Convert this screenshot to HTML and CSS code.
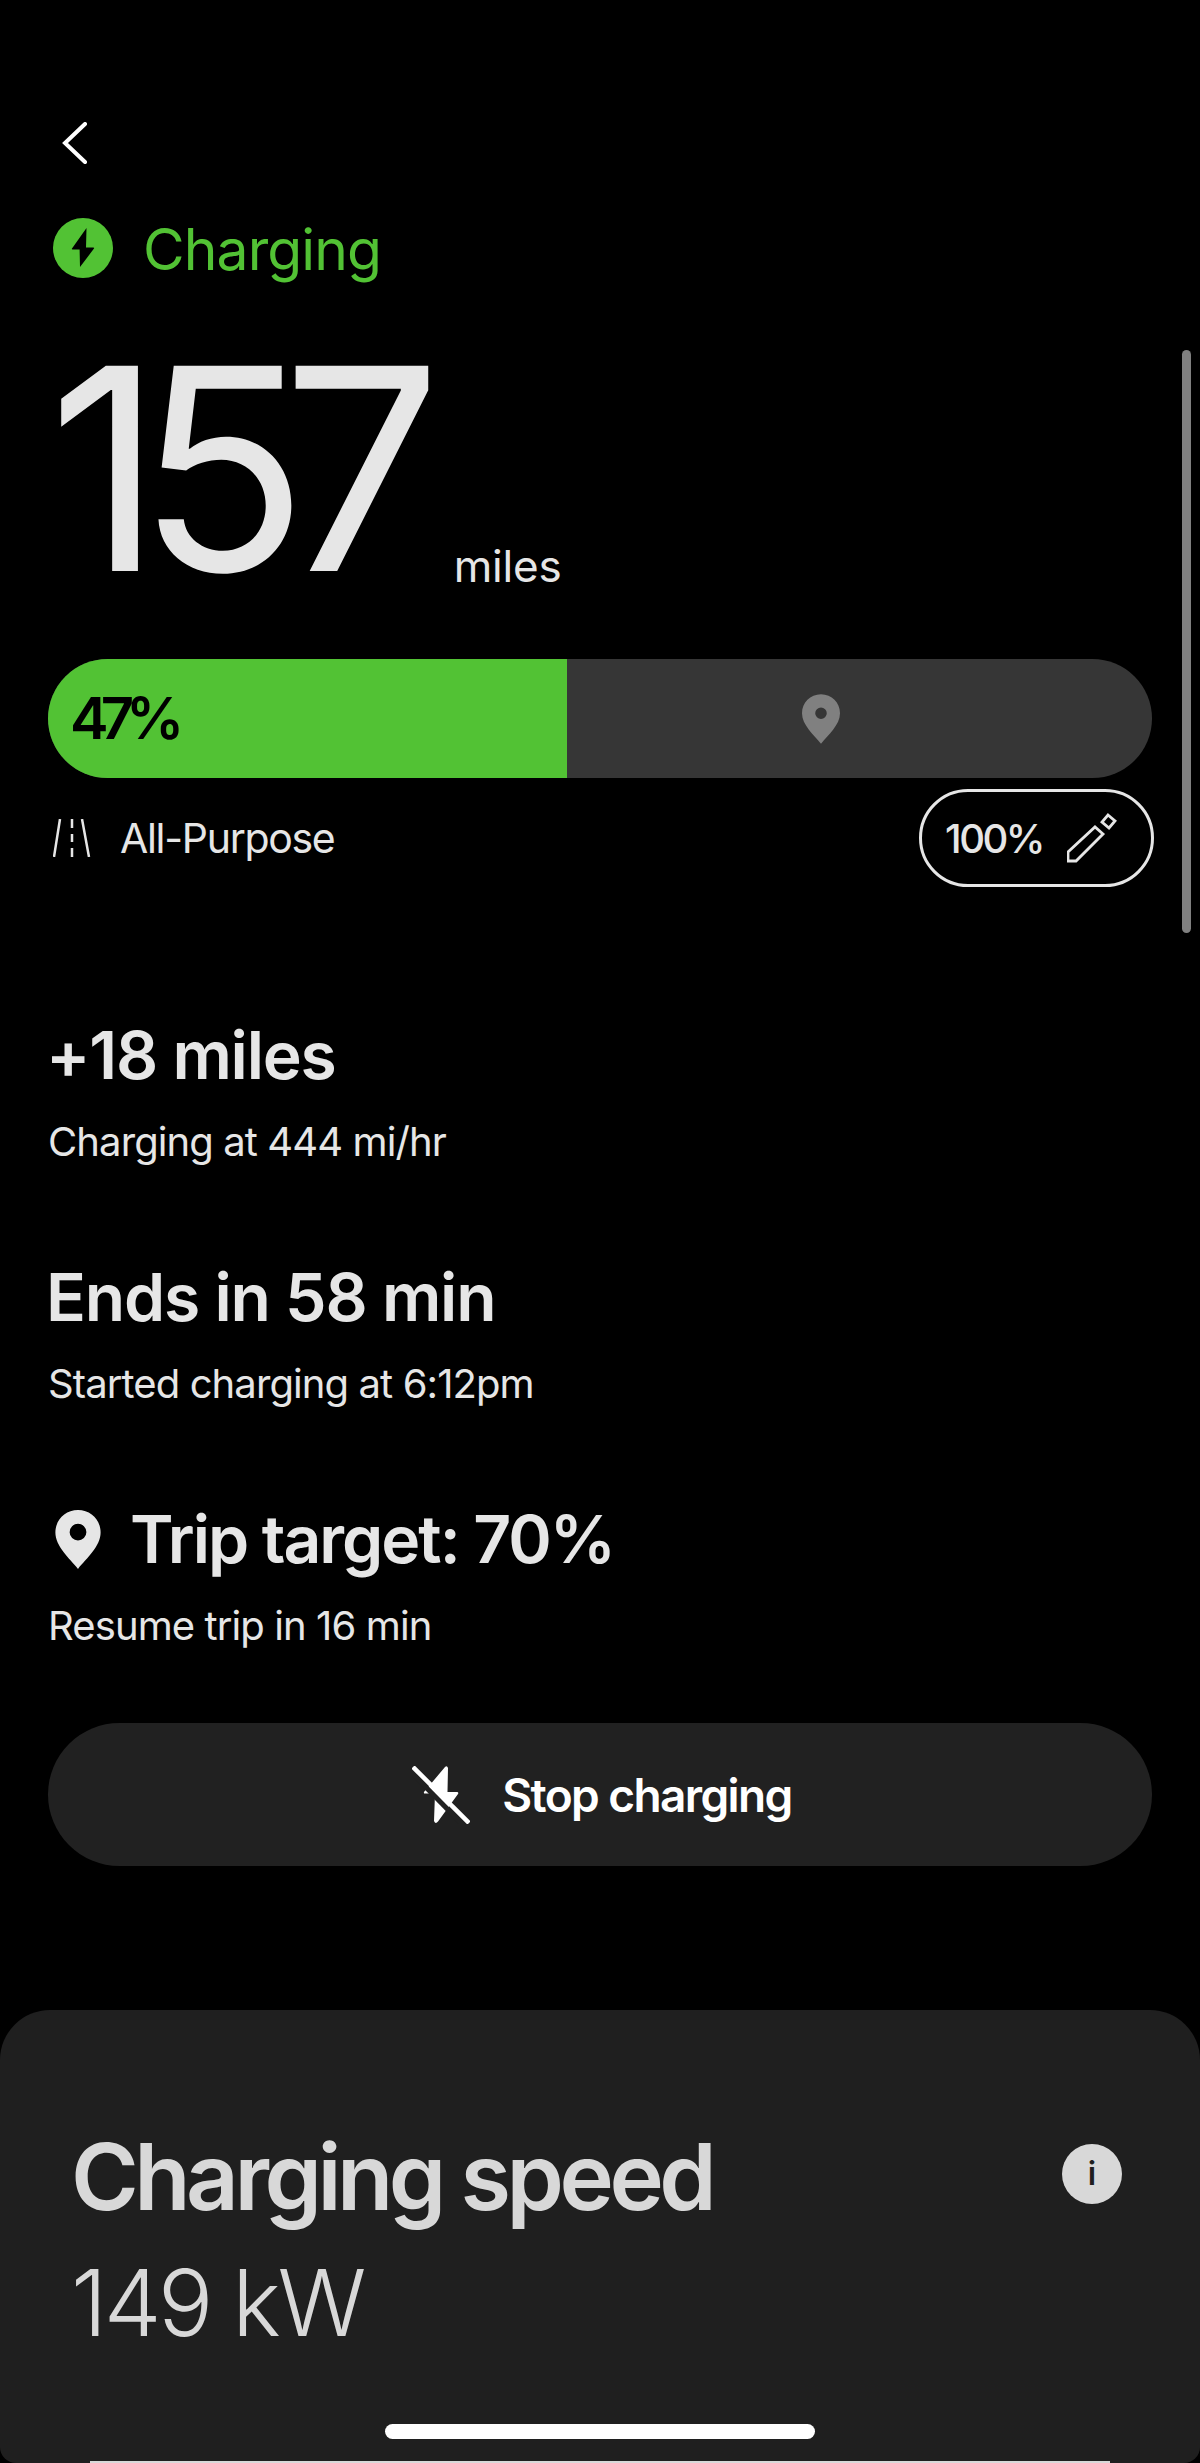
FILE: index.html
```html
<!doctype html>
<html>
  <head>
    <meta charset="utf-8">
    <title>Charging</title>
    <link rel="stylesheet" href="styles.css">
  </head>
  <body>
    <div class="screen">
      <div class="scrollbar"></div>

      <main class="content">
        <svg class="back" width="26" height="42" viewBox="0 0 26 42">
          <path d="M23 2 L3 21 L23 40" fill="none" stroke="#fff" stroke-width="4" stroke-linecap="round" stroke-linejoin="miter"/>
        </svg>

        <div class="status">
          <svg class="status-icon" width="60" height="60" viewBox="0 0 60 60">
            <circle cx="30" cy="30" r="30" fill="#52c234"/>
            <path d="M33.5 10 L19 30.5 Q18.4 31.6 19.6 31.6 L26.6 31.6 L27 49 L41 30.6 Q41.6 29.6 40.4 29.6 L33 29.6 Z" fill="#000"/>
          </svg>
          <span>Charging</span>
        </div>

        <div class="range">
          <span class="range-value">157</span>
          <span class="range-unit">miles</span>
        </div>

        <div class="battery">
          <div class="battery-fill" style="width: 47%"><span>47%</span></div>
          <svg class="battery-pin" width="38" height="50" viewBox="0 0 46 60">
            <path fill-rule="evenodd" d="M23 0C10 0 0 10 0 23c0 14 14 26 23 37 9-11 23-23 23-37C46 10 36 0 23 0Zm0 16a7 7 0 1 1 0 14 7 7 0 0 1 0-14Z" fill="#808080"/>
          </svg>
        </div>

        <div class="battery-meta">
          <div class="mode">
            <svg width="38" height="38" viewBox="0 0 38 38">
              <path d="M7 0 L1 38 M29 0 L36 38" fill="none" stroke="#e6e6e6" stroke-width="2.5"/>
              <path d="M19 0v9 M19 15v8 M19 29v9" fill="none" stroke="#e6e6e6" stroke-width="2.5"/>
            </svg>
            <span>All-Purpose</span>
          </div>
          <div class="limit">
            <span>100%</span>
            <svg width="50" height="50" viewBox="0 0 50 50">
              <path d="M1 39 L1 48 L9 48 L36 21 L28 14 Z M41 2 L48 8 L42 15 L35 9 Z" fill="none" stroke="#e6e6e6" stroke-width="2.8" stroke-linejoin="miter"/>
            </svg>
          </div>
        </div>

        <section class="stat stat-first">
          <h2>+18 miles</h2>
          <p>Charging at 444 mi/hr</p>
        </section>
        <section class="stat">
          <h2>Ends in 58 min</h2>
          <p>Started charging at 6:12pm</p>
        </section>
        <section class="stat">
          <h2 class="with-icon">
            <svg width="46" height="59" viewBox="0 0 46 60">
              <path fill-rule="evenodd" d="M23 0C10 0 0 10 0 23c0 14 14 26 23 37 9-11 23-23 23-37C46 10 36 0 23 0Zm0 14a8.500 8.500 0 1 1 0 17 8.500 8.500 0 0 1 0-17Z" fill="#e6e6e6"/>
            </svg>
            <span>Trip target: 70%</span>
          </h2>
          <p>Resume trip in 16 min</p>
        </section>

        <button class="stop">
          <svg width="58" height="58" viewBox="0 0 58 58">
            <path d="M33 1 L12 26 Q11.500 27.500 13 27.500 L23 27.500 L22 55 Q23.500 58.500 26 55.500 L46 28 Q47 26 45 26 L35.500 26 L36 2 Q35 -1 33 1 Z" fill="#fff"/>
            <path d="M-3 4 L52 60" stroke="#212121" stroke-width="5"/>
            <path d="M1 1 L57 57" stroke="#fff" stroke-width="4.500"/>
          </svg>
          <span>Stop charging</span>
        </button>
      </main>

      <section class="speed-card">
        <div class="speed-text">
          <h3>Charging speed</h3>
          <p>149 kW</p>
        </div>
        <div class="info">i</div>
        <div class="next-card"></div>
      </section>

      <div class="home-bar"></div>
    </div>
  </body>
</html>
```

FILE: styles.css
```css
:root {
  --green: #52c234;
  --text: #e6e6e6;
  --panel: #1f1f1f;
}

* {
  box-sizing: border-box;
}

html,
body {
  margin: 0;
  height: 100%;
  background: #000;
}

body {
  font-family: Inter, "Noto Sans", sans-serif;
  color: var(--text);
}

.screen {
  position: relative;
  width: 1200px;
  height: 2463px;
  overflow: hidden;
  display: flex;
  flex-direction: column;
}

.scrollbar {
  position: absolute;
  top: 350px;
  left: 1182px;
  width: 9px;
  height: 583px;
  border-radius: 5px;
  background: #808080;
}

.content {
  padding: 122px 48px 0 48px;
  display: flex;
  flex-direction: column;
}

.back {
  display: block;
  margin-left: 14px;
}

.status {
  display: flex;
  align-items: center;
  gap: 30px;
  margin-top: 54px;
  margin-left: 5px;
  height: 60px;
  font-size: 57px;
  color: var(--green);
  letter-spacing: -0.9px;
}

.status span {
  padding-top: 3px;
}

.range {
  display: flex;
  align-items: baseline;
  margin-top: 51px;
  height: 280px;
}

.range-value {
  font-size: 282px;
  line-height: 280px;
  font-weight: 400;
  letter-spacing: -26px;
}

.range-unit {
  font-size: 44px;
  margin-left: 38px;
  position: relative;
  top: 11px;
  letter-spacing: -0.2px;
}

.battery {
  position: relative;
  height: 119px;
  margin-top: 50px;
  border-radius: 60px;
  background: #363636;
  overflow: hidden;
}

.battery-fill {
  height: 100%;
  background: var(--green);
  color: #000;
  font-size: 58px;
  font-weight: 600;
  letter-spacing: -8px;
  line-height: 119px;
  padding-left: 22px;
}

.battery-pin {
  position: absolute;
  left: 754px;
  top: 35px;
}

.battery-meta {
  display: flex;
  align-items: center;
  justify-content: space-between;
  margin-top: 11px;
}

.mode {
  display: flex;
  align-items: center;
  gap: 29px;
  font-size: 41px;
  padding-left: 5px;
  letter-spacing: -1.3px;
}

.limit {
  display: flex;
  align-items: center;
  gap: 24px;
  height: 98px;
  padding: 0 34px 0 23px;
  margin-right: -2px;
  border: 3px solid var(--text);
  border-radius: 49px;
  font-size: 40px;
  font-weight: 500;
  letter-spacing: -2.5px;
}

.stat {
  margin-top: 91px;
}

.stat-first {
  margin-top: 128px;
}

.stat h2 {
  margin: 0 0 0 -2px;
  font-size: 66px;
  line-height: 80px;
  font-weight: 600;
  letter-spacing: -1.2px;
}

.stat p {
  margin: 23px 0 0;
  font-size: 40px;
  line-height: 48px;
  font-weight: 400;
  letter-spacing: -0.9px;
}

.with-icon {
  display: flex;
  align-items: center;
  gap: 29px;
}

.stat .with-icon {
  letter-spacing: -2px;
}

.with-icon svg {
  margin-left: 9px;
  flex: none;
}

.stop {
  display: flex;
  align-items: center;
  justify-content: center;
  gap: 32px;
  height: 143px;
  margin-top: 73px;
  padding: 0 0 0 4px;
  border: 0;
  border-radius: 72px;
  background: #212121;
  color: #fff;
  font-family: inherit;
  font-size: 46px;
  font-weight: 600;
  letter-spacing: -1.6px;
}

.speed-card {
  position: relative;
  flex: 1;
  margin-top: 144px;
  padding: 112px 78px 0 71px;
  display: flex;
  justify-content: space-between;
  align-items: flex-start;
  border-radius: 50px 50px 16px 16px;
  background: var(--panel);
}

.speed-text h3 {
  margin: 0;
  font-size: 92px;
  line-height: 110px;
  font-weight: 600;
  letter-spacing: -4.5px;
  color: #d8d8d8;
}

.speed-text p {
  margin: 16px 0 0;
  font-size: 92px;
  line-height: 110px;
  font-weight: 300;
  letter-spacing: -3.5px;
  color: #d8d8d8;
}

.info {
  width: 60px;
  height: 60px;
  margin-top: 22px;
  border-radius: 50%;
  background: #d8d8d8;
  color: var(--panel);
  font-size: 32px;
  font-weight: 600;
  line-height: 60px;
  text-align: center;
}

.next-card {
  position: absolute;
  left: 90px;
  right: 90px;
  bottom: 0;
  height: 2px;
  background: #d8d8d8;
}

.home-bar {
  position: absolute;
  left: 385px;
  top: 2424px;
  width: 430px;
  height: 15px;
  border-radius: 8px;
  background: #fff;
}
```
